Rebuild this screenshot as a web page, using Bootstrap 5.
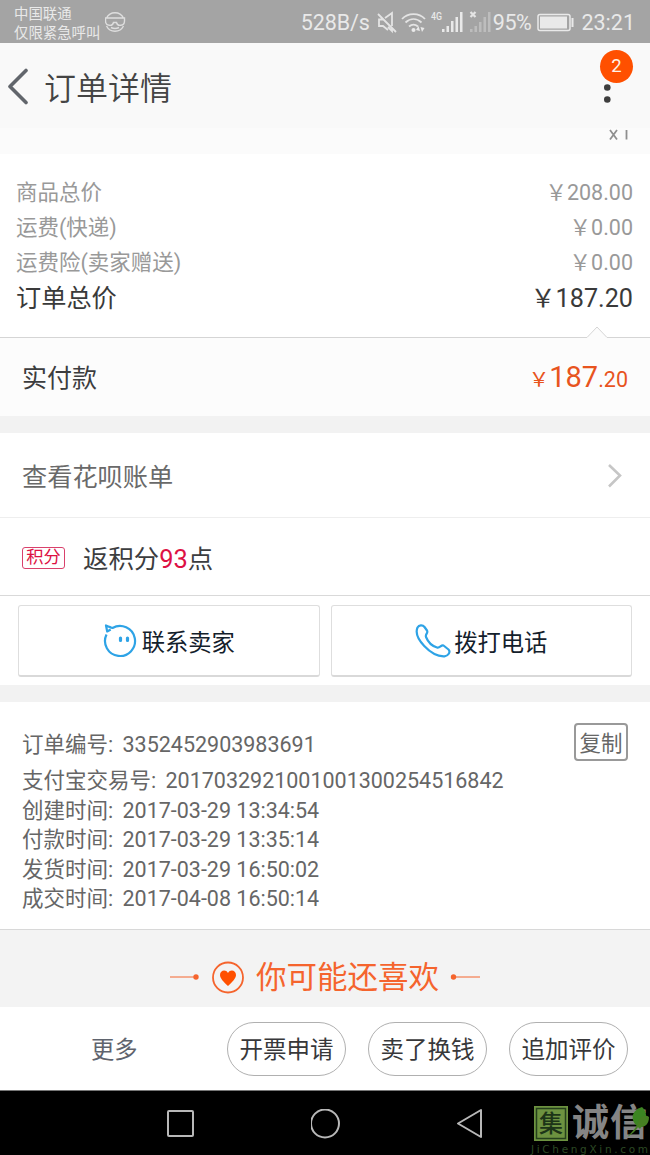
<!DOCTYPE html>
<html lang="zh-CN">
<head>
<meta charset="utf-8">
<meta name="viewport" content="width=device-width, initial-scale=1">
<title>订单详情</title>
<link href="https://cdn.jsdelivr.net/npm/bootstrap@5.3.0/dist/css/bootstrap.min.css" rel="stylesheet">
<style>
body{font-family:Roboto,"Noto Sans CJK SC",sans-serif;color:#3c3d3f;background:#fff;width:650px;height:1155px;overflow:hidden;line-height:1.2}
svg{display:block;flex:none}
.statusbar{height:43px;background:#a4a4a4;color:#e9e9e9;padding:3px 15px 0 14px;font-size:21.5px}
.carrier{font-size:14.4px;line-height:19.5px;width:87px;white-space:nowrap;padding-top:2px}
.titlebar{height:85px;background:#f9f9f9;padding:3px 30px 0 6px}
.titlebar h1{font-size:32px;font-weight:350;color:#444;padding-top:4px}
.msgs{top:-33px;left:-4px;width:33px;height:33px;background:#ff5000;font-size:18.5px;color:#fff4e8}
.qty{height:26px;background:#fbfbfb;overflow:hidden}
.sums{height:184px;padding:21px 17px 0;font-size:21.5px;color:#999;border-bottom:1px solid #d5d5d5}
.sums>div{height:35px}
.sums>div>span:first-child{margin-left:-1px}
.sums>.total{height:39px;font-size:25.2px;color:#3a3a3a}
.notch{right:42px;bottom:-1px}
.paid{height:78px;background:#fcfcfc;padding:3px 22px 0;font-size:25px}
.orange{color:#e8541e}
.gap-band{background:#f2f2f2}
.bill{height:85px;padding:2px 28px 0 22px;font-size:25.2px;color:#6a6a6a;border-bottom:1px solid #eee}
.bill span{padding-top:5px}
.points{height:78px;padding:2px 22px 0;font-size:25.4px;border-bottom:1px solid #d9d9d9}
.points>span:last-child{padding-top:3px}
.tagbox{width:43px;height:22px;border:1px solid #d9416c;border-radius:3px;color:#dd1144;font-size:17.3px;margin-right:18px}
.red{color:#dd1144}
.contact{height:89px;padding:9px 18px 8px;gap:11px}
.contact .btn{border:1px solid #dedede;border-bottom:2px solid #d9d9d9;border-radius:3px;font-size:23.3px;color:#13202b;background:#fff;padding:0}
.contact .btn span{padding-top:5px}
.info{height:228px;padding:23px 22px 0;font-size:21.5px;color:#666;border-bottom:1px solid #d8d8d8}
.info .line{height:29.5px;white-space:nowrap;position:relative;top:2px}
.info .line b{font-weight:400;margin-left:4px;letter-spacing:-.01px}
.copybtn{width:54px;height:38px;border:2px solid #999;border-radius:4px;font-size:21.5px;color:#666;padding-top:3px}
.like{height:77px;background:#f3f3f3;color:#f5642d;font-size:30.5px;padding-top:17px}
.like span{padding-top:3px}
.actions{height:83px;padding:0 22px 0 91px;font-size:23.3px;color:#5f646e}
.actions>span{padding-top:5px}
.actions .btn{width:119px;height:54px;border:1px solid #b0b0b0;font-size:23.5px;color:#38383a;padding:5px 0 0}
.sysnav{height:65px;background:#000;border-top:1px solid #777}
.nav-keys{padding-left:166px;gap:116px;padding-top:1px}
.wm{left:529px;top:1103px;width:121px;height:52px}
</style>
</head>
<body>
<header class="statusbar d-flex align-items-center">
  <div class="carrier">中国联通<br>仅限紧急呼叫</div>
  <svg class="ms-1" width="22" height="22" viewBox="0 0 22 22" fill="none" stroke="#dedede" stroke-width="1.400"><path d="M1.500 6A9.500 9.500 0 0 1 18.500 6M.5 6h19v3c0 5-7 6-8 1.500h-3C7.500 15 .5 14 .5 9zM1.500 14a9.500 9.500 0 0 0 17 0M6 15.500c3 1.500 5 1.500 8 0"/></svg>
  <span class="ms-auto" style="letter-spacing:-.1px">528B/s</span>
  <svg style="margin-left:6px" width="116" height="26" viewBox="0 0 116 26" fill="none" stroke="#e4e4e4" stroke-width="1.800">
    <path d="M2 4l18 18M9 8l7-5v13M12 17l4 4v-3M7 9.500H3v6.500h4l5 4"/>
    <path d="M26 9c6-6.500 17-6.500 23 0M29.500 12.500c5-4.500 11-4.500 16 0M33 16.500c3-2.500 6-2.500 9 0"/>
    <g fill="#e9e9e9" stroke="none"><circle cx="37.500" cy="20" r="2"/><path d="M40 20l2.500-4 1.500 5zM44.500 17l1.500 5 2.500-4z"/><text x="55" y="10" font-size="10.500" textLength="11" lengthAdjust="spacingAndGlyphs" font-weight="500">4G</text>
    <path d="M66 19h2.500v3H66zM70.500 16H73v6h-2.500zM75 11h2.500v11H75zM79.500 7H82v15h-2.500zM84 2h2.500v20H84z"/>
    <path fill="#bdbdbd" d="M94 19h2.500v3H94zM98.500 16h2.500v6h-2.500zM103 12h2.500v10H103zM107.500 7h2.500v15h-2.500zM112 2h2.500v20H112z"/></g>
    <path stroke-width="2.200" d="M94.500 2l5 5M99.500 2l-5 5"/>
  </svg>
  <span style="margin-left:1px;font-size:21.500px;letter-spacing:-.4px">95%</span>
  <svg style="margin-left:6px" width="38" height="20" viewBox="0 0 38 20"><rect x="1" y="1.500" width="32" height="16" rx="2" fill="none" stroke="#e9e9e9" stroke-width="1.500"/><path fill="#e9e9e9" d="M3 3.500h27v12H3zM34.500 5h2v9h-2z"/></svg>
  <span style="margin-left:6px">23:21</span>
</header>
<div class="titlebar d-flex align-items-center">
  <svg width="24" height="38" viewBox="0 0 24 38" fill="none" stroke="#62666c" stroke-width="3.600" stroke-linecap="round" stroke-linejoin="round"><path d="M20 2.500L4 18.500l16 16"/></svg>
  <h1 class="mb-0" style="margin-left:14px">订单详情</h1>
  <div class="position-relative ms-auto" style="width:16px;height:24px;margin-top:16px">
    <svg width="10" height="24" viewBox="0 0 10 24" fill="#3e3e3e"><circle cx="3.300" cy="4.500" r="3.300"/><circle cx="3.300" cy="16.500" r="3.300"/></svg>
    <span class="msgs position-absolute rounded-circle d-flex align-items-center justify-content-center">2</span>
  </div>
</div>
<div class="qty text-end" style="padding-right:20px"><svg class="ms-auto" width="22" height="14" viewBox="0 0 22 14" fill="none" stroke="#8f8f8f" stroke-width="1.800"><path d="M2 2l7 9.500M9 2L2 11.500M18.500 2v9.500"/></svg></div>
<section class="sums position-relative">
  <div class="d-flex justify-content-between align-items-center"><span>商品总价</span><span>￥208.00</span></div>
  <div class="d-flex justify-content-between align-items-center"><span>运费(快递)</span><span>￥0.00</span></div>
  <div class="d-flex justify-content-between align-items-center"><span>运费险(卖家赠送)</span><span>￥0.00</span></div>
  <div class="total d-flex justify-content-between align-items-center"><span>订单总价</span><span>￥187.20</span></div>
  <svg class="notch position-absolute" width="22" height="12" viewBox="0 0 22 12"><path d="M0 12L11 1l11 11z" fill="#fcfcfc"/><path d="M0 11.500h1L11 1l10 10.500h1" fill="none" stroke="#d5d5d5"/></svg>
</section>
<section class="paid d-flex justify-content-between align-items-center"><span>实付款</span><span class="orange d-flex align-items-baseline" style="margin-top:-3px"><span style="font-size:20.500px">￥</span><span style="font-size:29px">187</span><span style="font-size:21.500px">.20</span></span></section>
<div class="gap-band" style="height:17px"></div>
<section class="bill d-flex justify-content-between align-items-center"><span>查看花呗账单</span>
  <svg width="16" height="26" viewBox="0 0 16 26" fill="none" stroke="#c6c6c6" stroke-width="2.600"><path d="M3 2l11 10.500L3 23.500"/></svg></section>
<section class="points d-flex align-items-center"><span class="tagbox d-flex align-items-center justify-content-center">积分</span><span>返积分<span class="red">93</span>点</span></section>
<section class="contact d-flex">
  <button class="btn flex-fill d-flex align-items-center justify-content-center w-50">
    <svg width="34" height="34" viewBox="0 0 34 34" fill="none" stroke="#2ea3e6" stroke-width="2.200"><path d="M3.500 10.500A15 15 0 1 0 9.500 4Q8 3.500 3 1.500L4.200 7.500l3.500-2" stroke-linejoin="round"/><path d="M17.500 14v2.500M24.500 14v2.500" stroke-width="3.200" stroke-linecap="round"/></svg>
    <span style="margin-left:5px">联系卖家</span></button>
  <button class="btn flex-fill d-flex align-items-center justify-content-center w-50">
    <svg width="36" height="34" viewBox="0 0 36 34" fill="none" stroke="#2ea3e6" stroke-width="2.200" stroke-linejoin="round"><path d="M2.500 3.500C4 1 7.500.500 9.500 3L12 6.500c1.500 2.500-2 3.500-1 6.500 2 5 6 9 11 10.500 3 1 4-3 6.500-2l5 4c2.500 2.500-.5 6.500-4 6.800C16 33-2 14 2.500 3.500z"/></svg>
    <span style="margin-left:3px">拨打电话</span></button>
</section>
<div class="gap-band" style="height:17px"></div>
<section class="info">
  <div class="d-flex justify-content-between" style="height:41px"><div class="line" style="padding-top:5px">订单编号:<b> 3352452903983691</b></div><span class="copybtn d-flex align-items-center justify-content-center" style="margin-top:-2px">复制</span></div>
  <div class="line">支付宝交易号:<b> 2017032921001001300254516842</b></div>
  <div class="line">创建时间:<b> 2017-03-29 13:34:54</b></div>
  <div class="line">付款时间:<b> 2017-03-29 13:35:14</b></div>
  <div class="line">发货时间:<b> 2017-03-29 16:50:02</b></div>
  <div class="line">成交时间:<b> 2017-04-08 16:50:14</b></div>
</section>
<section class="like d-flex align-items-center justify-content-center">
  <svg width="30" height="6" viewBox="0 0 30 6"><path d="M0 3h27" stroke="#f5642d"/><circle cx="26" cy="3" r="2.700" fill="#f5642d"/></svg>
  <svg style="margin:0 11px 0 12px" width="33" height="33" viewBox="0 0 33 33"><circle cx="16" cy="16.500" r="15" fill="none" stroke="#f5642d" stroke-width="1.800"/><path d="M16 25C11.500 20.500 8 17.500 8 14c0-5 6-6 8-2 2-4 8-3 8 2 0 3.500-3.500 6.500-8 11z" fill="#ff5000"/></svg>
  <span>你可能还喜欢</span>
  <svg style="margin-left:11px" width="30" height="6" viewBox="0 0 30 6"><path d="M3 3h27" stroke="#f5642d"/><circle cx="3.500" cy="3" r="2.700" fill="#f5642d"/></svg>
</section>
<section class="actions d-flex align-items-center"><span class="me-auto">更多</span>
  <div class="d-flex" style="gap:22px"><button class="btn rounded-pill">开票申请</button><button class="btn rounded-pill">卖了换钱</button><button class="btn rounded-pill">追加评价</button></div>
</section>
<footer class="sysnav">
  <div class="nav-keys d-flex align-items-center h-100">
    <svg width="29" height="30" viewBox="0 0 29 30"><rect x="2" y="2" width="25" height="25" rx="1" fill="none" stroke="#b8b8b8" stroke-width="2"/></svg>
    <svg width="30" height="30" viewBox="0 0 30 30"><circle cx="14" cy="14.500" r="14" fill="none" stroke="#b8b8b8" stroke-width="2"/></svg>
    <svg width="28" height="32" viewBox="0 0 28 32"><path d="M24 2v27L1 15.500z" fill="none" stroke="#b8b8b8" stroke-width="2" stroke-linejoin="round"/></svg>
  </div>
</footer>
<svg class="wm position-absolute" viewBox="0 0 121 52" font-family="'Noto Sans CJK SC',sans-serif">
  <rect x="5" y="3" width="34" height="35" fill="#6d9240"/><rect x="7.500" y="5.500" width="29" height="30" fill="none" stroke="#25401c" stroke-width="1.500"/>
  <text x="10" y="29" font-size="24" font-weight="500" fill="#1d3518">集</text>
  <text x="43" y="33" font-size="37" font-weight="700" fill="#858585" textLength="75">诚信</text>
  <path d="M108 22c-5-7-2-14 7-17 4 4 5 8 3 13l-5 9z" fill="#3c8522" transform="translate(-2 -1)"/>
  <path d="M109 20c1-7 8-9 11-6 0 8-5 11-11 10-3 5-6 7-11 10 6-6 8-8 11-14z" fill="#467f22"/>
  <text x="2" y="50" font-size="10.500" font-family="'DejaVu Sans',sans-serif" fill="#2c4924" textLength="117">JiChengXin.com</text>
</svg>
<script src="https://cdn.jsdelivr.net/npm/bootstrap@5.3.0/dist/js/bootstrap.bundle.min.js"></script>
</body>
</html>
